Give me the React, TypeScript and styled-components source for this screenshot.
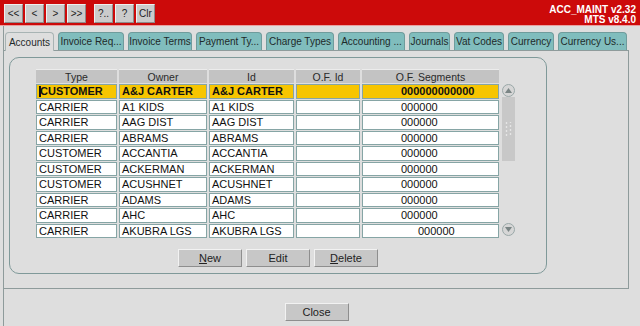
import React from 'react';
import styled, { createGlobalStyle } from 'styled-components';

const GlobalStyle = createGlobalStyle`
    html, body {
        margin: 0;
        padding: 0;
        background: #dedede;
    }
    body {
        font-family: 'Liberation Sans', Arial, sans-serif;
        font-size: 11px;
        color: #1a1a1a;
    }
`;

const Window = styled.div`
    width: 640px;
    height: 326px;
    display: flex;
    flex-direction: column;
    overflow: hidden;
    background: #dedede;
`;

const TitleBar = styled.div`
    height: 26px;
    background: #cc0a0a;
    border-bottom: 1px solid #e9a0a0;
    display: flex;
    align-items: flex-start;
    padding: 4px 4px 0 4px;
    box-sizing: border-box;
`;

const NavGroup = styled.div`
    display: flex;
    gap: 2px;
    margin-right: 8px;
`;

const NavButton = styled.button`
    width: 19px;
    height: 19px;
    padding: 0;
    background: #cbcbcb;
    border: 1px solid;
    border-color: #efefef #8c8c8c #8c8c8c #efefef;
    font-family: 'Liberation Sans', Arial, sans-serif;
    font-size: 10px;
    color: #222;
`;

const TitleText = styled.div`
    margin-left: auto;
    margin-top: 1px;
    color: #fff;
    font-weight: bold;
    font-size: 10px;
    line-height: 10px;
    text-align: right;
`;

const Frame = styled.div`
    flex: 1;
    display: flex;
    flex-direction: column;
    margin: 0 11px 0 3px;
    border-left: 1px solid #8e9b9b;
`;

const TabStrip = styled.div`
    display: flex;
    gap: 4px;
    padding: 6px 0 0 1px;
    height: 18px;
`;

const Tab = styled.div<{ $w: number; $active?: boolean }>`
    width: ${(p) => p.$w}px;
    box-sizing: border-box;
    height: ${(p) => (p.$active ? 19 : 18)}px;
    display: flex;
    align-items: center;
    justify-content: center;
    font-size: 10px;
    color: #1e2a2a;
    white-space: nowrap;
    border: 1px solid ${(p) => (p.$active ? '#a8b4b4' : '#6f9c9c')};
    border-bottom: none;
    border-radius: 4px 4px 0 0;
    background: ${(p) => (p.$active ? '#dedede' : '#80bdbd')};
    position: relative;
    z-index: ${(p) => (p.$active ? 1 : 0)};
`;

const TabPanel = styled.div`
    height: 239px;
    box-sizing: border-box;
    border-top: 1px solid #8e9b9b;
    border-right: 1px solid #8e9b9b;
    border-bottom: 1px solid #8e9b9b;
    padding: 6px 0 0 5px;
`;

const GroupBox = styled.div`
    width: 538px;
    height: 217px;
    box-sizing: border-box;
    border: 1px solid #7f9999;
    border-radius: 10px;
    padding: 11px 0 0 26px;
    display: flex;
    flex-direction: column;
`;

const TableWrap = styled.div`
    display: flex;
    gap: 2px;
`;

const Grid = styled.div`
    display: grid;
    grid-template-columns: 81px 88px 85px 64px 137px;
    grid-template-rows: 14px;
    grid-auto-rows: 14.5px;
    column-gap: 2px;
    row-gap: 1px;
`;

const HeadCell = styled.div`
    background: #c3c3c3;
    border-top: 1px solid #ececec;
    display: flex;
    align-items: center;
    justify-content: center;
    font-size: 10.5px;
    color: #2a2a2a;
`;

const Cell = styled.div<{ $sel?: boolean; $pad?: number }>`
    box-sizing: border-box;
    background: ${(p) => (p.$sel ? '#f7c500' : '#ffffff')};
    border: 1px solid #86a5a5;
    display: flex;
    align-items: center;
    padding: 0 0 0 ${(p) => p.$pad ?? 2}px;
    font-size: 11px;
    font-weight: ${(p) => (p.$sel ? 'bold' : 'normal')};
    color: #111;
    white-space: nowrap;
    overflow: hidden;
`;

const Caret = styled.span`
    display: inline-block;
    width: 2px;
    height: 11px;
    background: #111;
    margin-right: -1px;
`;

const Scroll = styled.div`
    width: 14px;
    margin-top: 15px;
    display: flex;
    flex-direction: column;
    align-items: center;
`;

const ArrowBtn = styled.div`
    width: 13px;
    height: 13px;
    border-radius: 50%;
    border: 1px solid #9aa8a8;
    background: #d6d6d6;
    box-sizing: border-box;
    display: flex;
    align-items: center;
    justify-content: center;
`;

const Thumb = styled.div`
    width: 13px;
    height: 64px;
    background: #c8c8c8;
    display: flex;
    align-items: center;
    justify-content: center;
`;

const Track = styled.div`
    width: 13px;
    flex: 0 0 62px;
    background: #dedede;
`;

const ButtonRow = styled.div`
    display: flex;
    gap: 4px;
    justify-content: center;
    margin: 11px 0 0 -26px;
`;

const Button = styled.button`
    width: 64px;
    height: 18px;
    padding: 0;
    background: #c7c7c7;
    border: 1px solid;
    border-color: #f2f2f2 #8e8e8e #8e8e8e #f2f2f2;
    font-family: 'Liberation Sans', Arial, sans-serif;
    font-size: 11px;
    color: #222;

    u {
        text-decoration: underline;
    }
`;

const Footer = styled.div`
    flex: 1;
    display: flex;
    justify-content: center;
    padding: 14px 0 0 0;
`;

const tabs: [string, number][] = [
    ['Accounts', 49],
    ['Invoice Req...', 66],
    ['Invoice Terms', 64],
    ['Payment Ty...', 66],
    ['Charge Types', 68],
    ['Accounting ...', 67],
    ['Journals', 41],
    ['Vat Codes', 50],
    ['Currency', 46],
    ['Currency Us...', 69],
];

const rows = [
    ['CUSTOMER', 'A&J CARTER', 'A&J CARTER', '', '000000000000'],
    ['CARRIER', 'A1 KIDS', 'A1 KIDS', '', '000000'],
    ['CARRIER', 'AAG DIST', 'AAG DIST', '', '000000'],
    ['CARRIER', 'ABRAMS', 'ABRAMS', '', '000000'],
    ['CUSTOMER', 'ACCANTIA', 'ACCANTIA', '', '000000'],
    ['CUSTOMER', 'ACKERMAN', 'ACKERMAN', '', '000000'],
    ['CUSTOMER', 'ACUSHNET', 'ACUSHNET', '', '000000'],
    ['CARRIER', 'ADAMS', 'ADAMS', '', '000000'],
    ['CARRIER', 'AHC', 'AHC', '', '000000'],
    ['CARRIER', 'AKUBRA LGS', 'AKUBRA LGS', '', '000000'],
];

const Arrow = ({ up }: { up?: boolean }) => (
    <svg width="7" height="5" viewBox="0 0 7 5">
        <path d={up ? 'M0 5 L3.5 0 L7 5 Z' : 'M0 0 L3.5 5 L7 0 Z'} fill="#7a8585" />
    </svg>
);

const Grip = () => (
    <svg width="7" height="14" viewBox="0 0 7 14">
        {[1, 5, 9, 13].map((y) => (
            <g key={y}>
                <circle cx="1.5" cy={y} r="0.8" fill="#f4f4f4" />
                <circle cx="5.5" cy={y - 1} r="0.8" fill="#f4f4f4" />
            </g>
        ))}
    </svg>
);

const App: React.FC = () => {
    return (
        <Window>
            <GlobalStyle />
            <TitleBar>
                <NavGroup>
                    <NavButton>&lt;&lt;</NavButton>
                    <NavButton>&lt;</NavButton>
                    <NavButton>&gt;</NavButton>
                    <NavButton>&gt;&gt;</NavButton>
                </NavGroup>
                <NavGroup>
                    <NavButton>?..</NavButton>
                    <NavButton>?</NavButton>
                    <NavButton>Clr</NavButton>
                </NavGroup>
                <TitleText>
                    ACC_MAINT v2.32
                    <br />
                    MTS v8.4.0
                </TitleText>
            </TitleBar>
            <Frame>
                <TabStrip>
                    {tabs.map(([label, w], i) => (
                        <Tab key={label} $w={w} $active={i === 0}>
                            {label}
                        </Tab>
                    ))}
                </TabStrip>
                <TabPanel>
                    <GroupBox>
                        <TableWrap>
                            <Grid>
                                {['Type', 'Owner', 'Id', 'O.F. Id', 'O.F. Segments'].map((h) => (
                                    <HeadCell key={h}>{h}</HeadCell>
                                ))}
                                {rows.map((r, ri) =>
                                    r.map((v, ci) => (
                                        <Cell
                                            key={`${ri}-${ci}`}
                                            $sel={ri === 0}
                                            $pad={ci === 4 ? (ri === rows.length - 1 ? 55 : 38) : 2}
                                        >
                                            {ri === 0 && ci === 0 && <Caret />}
                                            {v}
                                        </Cell>
                                    ))
                                )}
                            </Grid>
                            <Scroll>
                                <ArrowBtn>
                                    <Arrow up />
                                </ArrowBtn>
                                <Thumb>
                                    <Grip />
                                </Thumb>
                                <Track />
                                <ArrowBtn>
                                    <Arrow />
                                </ArrowBtn>
                            </Scroll>
                        </TableWrap>
                        <ButtonRow>
                            <Button>
                                <u>N</u>ew
                            </Button>
                            <Button>Edit</Button>
                            <Button>
                                <u>D</u>elete
                            </Button>
                        </ButtonRow>
                    </GroupBox>
                </TabPanel>
                <Footer>
                    <Button>Close</Button>
                </Footer>
            </Frame>
        </Window>
    );
};

export default App;
